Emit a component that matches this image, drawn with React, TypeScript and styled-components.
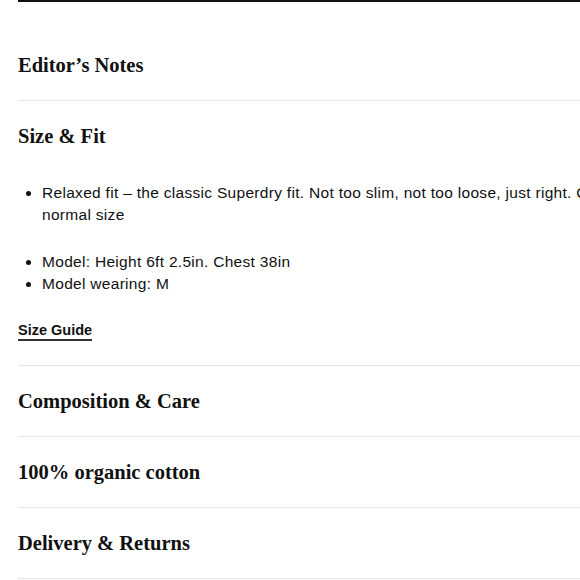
import React from 'react'
import styled, { createGlobalStyle } from 'styled-components'

const GlobalStyle = createGlobalStyle`
  html, body {
    margin: 0;
    padding: 0;
    overflow: hidden;
    background: #fff;
  }
  body {
    font-family: 'Liberation Sans', Arial, sans-serif;
    color: #111;
  }
`

const Page = styled.div`
  width: 680px;
  margin-left: 18px;
  border-top: 2px solid #111;
`

const Section = styled.section<{ $first?: boolean }>`
  border-bottom: 1px solid #e4e4e4;
  padding-top: ${(p) => (p.$first ? '28px' : '0')};
`

const Header = styled.div`
  height: 70px;
  display: flex;
  align-items: center;
`

const Title = styled.h3`
  margin: 0;
  font-family: 'Liberation Serif', 'Times New Roman', serif;
  font-weight: 700;
  font-size: 20.5px;
  line-height: 24px;
  color: #111;
`

const Body = styled.div`
  padding: 11px 0 24px;
`

const List = styled.ul<{ $gap?: number }>`
  margin: 0 0 ${(p) => p.$gap ?? 0}px;
  padding-left: 24px;
  font-size: 15.5px;
  letter-spacing: 0.3px;
  line-height: 22px;
`

const Item = styled.li``

const GuideLink = styled.a`
  display: inline-block;
  font-size: 14.5px;
  font-weight: 700;
  line-height: 18px;
  color: #111;
  text-decoration: none;
  border-bottom: 2px solid #333;
`

const SECTIONS = ['Composition & Care', '100% organic cotton', 'Delivery & Returns']

const App = () => {
  return (
    <>
      <GlobalStyle />
      <Page>
        <Section $first>
          <Header>
            <Title>Editor’s Notes</Title>
          </Header>
        </Section>
        <Section>
          <Header>
            <Title>Size &amp; Fit</Title>
          </Header>
          <Body>
            <List $gap={25}>
              <Item>
                Relaxed fit – the classic Superdry fit. Not too slim, not too loose, just right. Choose your
                normal size
              </Item>
            </List>
            <List $gap={26}>
              <Item>Model: Height 6ft 2.5in. Chest 38in</Item>
              <Item>Model wearing: M</Item>
            </List>
            <GuideLink href="#">Size Guide</GuideLink>
          </Body>
        </Section>
        {SECTIONS.map((s) => (
          <Section key={s}>
            <Header>
              <Title>{s}</Title>
            </Header>
          </Section>
        ))}
      </Page>
    </>
  )
}

export default App
